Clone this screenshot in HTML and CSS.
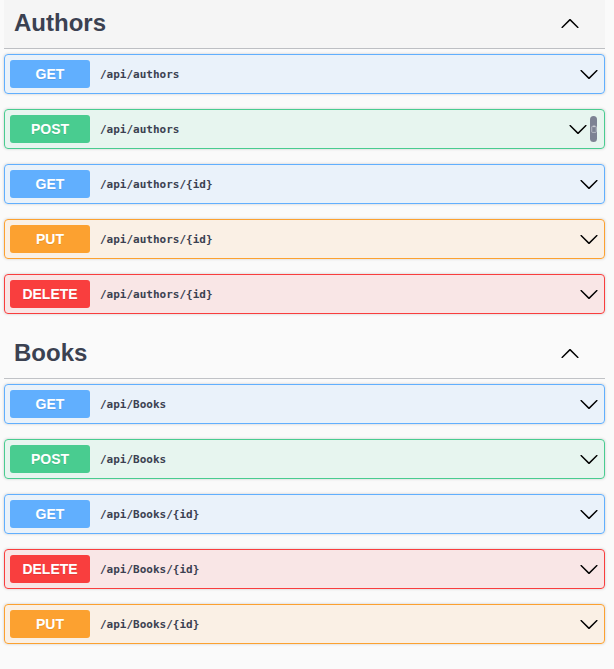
FILE: index.html
```html
<!DOCTYPE html>
<html lang="en">
<head>
<meta charset="utf-8">
<title>Swagger UI</title>
<link rel="stylesheet" href="styles.css">
</head>
<body>
<div class="page">
  <section class="tag-section">
    <div class="tag-header tag-header-hover">
      <h3 class="tag-title">Authors</h3>
      <button class="expand" aria-label="Collapse">
        <svg class="arrow" viewBox="0 0 20 20" width="20" height="20"><path d="M17.418 14.908c.272.268.709.268.979 0s.271-.701 0-.969l-7.908-7.83c-.27-.268-.707-.268-.979 0l-7.908 7.83c-.27.268-.27.701 0 .969.271.268.709.268.979 0L10 7.763l7.418 7.145z"/></svg>
      </button>
    </div>
    <div class="ops">
      <div class="op op-get"><div class="summary"><span class="method">GET</span><span class="path">/api/authors</span><svg class="arrow" viewBox="0 0 20 20" width="20" height="20"><path d="M17.418 6.109c.272-.268.709-.268.979 0s.271.701 0 .969l-7.908 7.83c-.27.268-.707.268-.979 0l-7.908-7.83c-.27-.268-.27-.701 0-.969.271-.268.709-.268.979 0L10 13.25l7.418-7.141z"/></svg></div></div>
      <div class="op op-post"><div class="summary"><span class="method">POST</span><span class="path">/api/authors</span><svg class="arrow" viewBox="0 0 20 20" width="20" height="20"><path d="M17.418 6.109c.272-.268.709-.268.979 0s.271.701 0 .969l-7.908 7.83c-.27.268-.707.268-.979 0l-7.908-7.83c-.27-.268-.27-.701 0-.969.271-.268.709-.268.979 0L10 13.25l7.418-7.141z"/></svg><span class="copy"><svg viewBox="0 0 8 10" width="6" height="8"><rect x="1" y="1.5" width="6" height="8" rx="0.8" fill="none" stroke="#c9ccd4" stroke-width="1"/><rect x="2.5" y="0.5" width="3" height="2" fill="#c9ccd4"/></svg></span></div></div>
      <div class="op op-get"><div class="summary"><span class="method">GET</span><span class="path">/api/authors/{id}</span><svg class="arrow" viewBox="0 0 20 20" width="20" height="20"><path d="M17.418 6.109c.272-.268.709-.268.979 0s.271.701 0 .969l-7.908 7.83c-.27.268-.707.268-.979 0l-7.908-7.83c-.27-.268-.27-.701 0-.969.271-.268.709-.268.979 0L10 13.25l7.418-7.141z"/></svg></div></div>
      <div class="op op-put"><div class="summary"><span class="method">PUT</span><span class="path">/api/authors/{id}</span><svg class="arrow" viewBox="0 0 20 20" width="20" height="20"><path d="M17.418 6.109c.272-.268.709-.268.979 0s.271.701 0 .969l-7.908 7.83c-.27.268-.707.268-.979 0l-7.908-7.83c-.27-.268-.27-.701 0-.969.271-.268.709-.268.979 0L10 13.25l7.418-7.141z"/></svg></div></div>
      <div class="op op-delete"><div class="summary"><span class="method">DELETE</span><span class="path">/api/authors/{id}</span><svg class="arrow" viewBox="0 0 20 20" width="20" height="20"><path d="M17.418 6.109c.272-.268.709-.268.979 0s.271.701 0 .969l-7.908 7.83c-.27.268-.707.268-.979 0l-7.908-7.83c-.27-.268-.27-.701 0-.969.271-.268.709-.268.979 0L10 13.25l7.418-7.141z"/></svg></div></div>
    </div>
  </section>

  <section class="tag-section">
    <div class="tag-header">
      <h3 class="tag-title">Books</h3>
      <button class="expand" aria-label="Collapse">
        <svg class="arrow" viewBox="0 0 20 20" width="20" height="20"><path d="M17.418 14.908c.272.268.709.268.979 0s.271-.701 0-.969l-7.908-7.83c-.27-.268-.707-.268-.979 0l-7.908 7.83c-.27.268-.27.701 0 .969.271.268.709.268.979 0L10 7.763l7.418 7.145z"/></svg>
      </button>
    </div>
    <div class="ops">
      <div class="op op-get"><div class="summary"><span class="method">GET</span><span class="path">/api/Books</span><svg class="arrow" viewBox="0 0 20 20" width="20" height="20"><path d="M17.418 6.109c.272-.268.709-.268.979 0s.271.701 0 .969l-7.908 7.83c-.27.268-.707.268-.979 0l-7.908-7.83c-.27-.268-.27-.701 0-.969.271-.268.709-.268.979 0L10 13.25l7.418-7.141z"/></svg></div></div>
      <div class="op op-post"><div class="summary"><span class="method">POST</span><span class="path">/api/Books</span><svg class="arrow" viewBox="0 0 20 20" width="20" height="20"><path d="M17.418 6.109c.272-.268.709-.268.979 0s.271.701 0 .969l-7.908 7.83c-.27.268-.707.268-.979 0l-7.908-7.83c-.27-.268-.27-.701 0-.969.271-.268.709-.268.979 0L10 13.25l7.418-7.141z"/></svg></div></div>
      <div class="op op-get"><div class="summary"><span class="method">GET</span><span class="path">/api/Books/{id}</span><svg class="arrow" viewBox="0 0 20 20" width="20" height="20"><path d="M17.418 6.109c.272-.268.709-.268.979 0s.271.701 0 .969l-7.908 7.83c-.27.268-.707.268-.979 0l-7.908-7.83c-.27-.268-.27-.701 0-.969.271-.268.709-.268.979 0L10 13.25l7.418-7.141z"/></svg></div></div>
      <div class="op op-delete"><div class="summary"><span class="method">DELETE</span><span class="path">/api/Books/{id}</span><svg class="arrow" viewBox="0 0 20 20" width="20" height="20"><path d="M17.418 6.109c.272-.268.709-.268.979 0s.271.701 0 .969l-7.908 7.83c-.27.268-.707.268-.979 0l-7.908-7.83c-.27-.268-.27-.701 0-.969.271-.268.709-.268.979 0L10 13.25l7.418-7.141z"/></svg></div></div>
      <div class="op op-put"><div class="summary"><span class="method">PUT</span><span class="path">/api/Books/{id}</span><svg class="arrow" viewBox="0 0 20 20" width="20" height="20"><path d="M17.418 6.109c.272-.268.709-.268.979 0s.271.701 0 .969l-7.908 7.83c-.27.268-.707.268-.979 0l-7.908-7.83c-.27-.268-.27-.701 0-.969.271-.268.709-.268.979 0L10 13.25l7.418-7.141z"/></svg></div></div>
    </div>
  </section>
</div>
</body>
</html>
```

FILE: styles.css
```css
html, body {
  margin: 0;
  padding: 0;
  background: #fafafa;
}

body {
  font-family: "Liberation Sans", Arial, sans-serif;
  color: #3b4151;
}

.page {
  margin-top: -1px;
  padding: 0 9px 0 4px;
}

.tag-section {
  display: flex;
  flex-direction: column;
}

.tag-header {
  display: flex;
  align-items: center;
  padding: 10px 20px 12px 10px;
  border-bottom: 1px solid rgba(59, 65, 81, 0.3);
  margin-bottom: 5px;
}

.tag-header-hover {
  background: rgba(0, 0, 0, 0.02);
}

.tag-title {
  flex: 1;
  margin: 0;
  font-size: 24px;
  line-height: 27px;
  font-weight: 700;
  color: #3b4151;
}

.expand {
  display: flex;
  align-items: center;
  border: none;
  background: none;
  padding: 0;
  margin: 0 5px 0 0;
}

.arrow {
  display: block;
  flex: none;
  fill: #000;
}

.ops {
  display: flex;
  flex-direction: column;
}

.op {
  margin-bottom: 15px;
  border: 1px solid #000;
  border-radius: 4px;
  box-shadow: 0 0 3px rgba(0, 0, 0, 0.19);
}

.summary {
  display: flex;
  align-items: center;
  padding: 5px;
}

.method {
  flex: none;
  width: 80px;
  height: 28px;
  line-height: 28px;
  text-align: center;
  border-radius: 3px;
  font-size: 14px;
  font-weight: 700;
  color: #fff;
  text-shadow: 0 1px 0 rgba(0, 0, 0, 0.1);
}

.path {
  flex: 1;
  padding: 0 10px;
  font-family: "DejaVu Sans Mono", "Liberation Mono", monospace;
  font-size: 11px;
  font-weight: 600;
  color: #3b4151;
}

.copy {
  flex: none;
  display: flex;
  align-items: center;
  justify-content: center;
  width: 7px;
  height: 26px;
  margin: 0 2px 0 2px;
  border-radius: 4px;
  background: #7d8293;
}

.op-get { border-color: #61affe; background: rgba(97, 175, 254, 0.1); }
.op-get .method { background: #61affe; }

.op-post { border-color: #49cc90; background: rgba(73, 204, 144, 0.1); }
.op-post .method { background: #49cc90; }

.op-put { border-color: #fca130; background: rgba(252, 161, 48, 0.1); }
.op-put .method { background: #fca130; }

.op-delete { border-color: #f93e3e; background: rgba(249, 62, 62, 0.1); }
.op-delete .method { background: #f93e3e; }
```
